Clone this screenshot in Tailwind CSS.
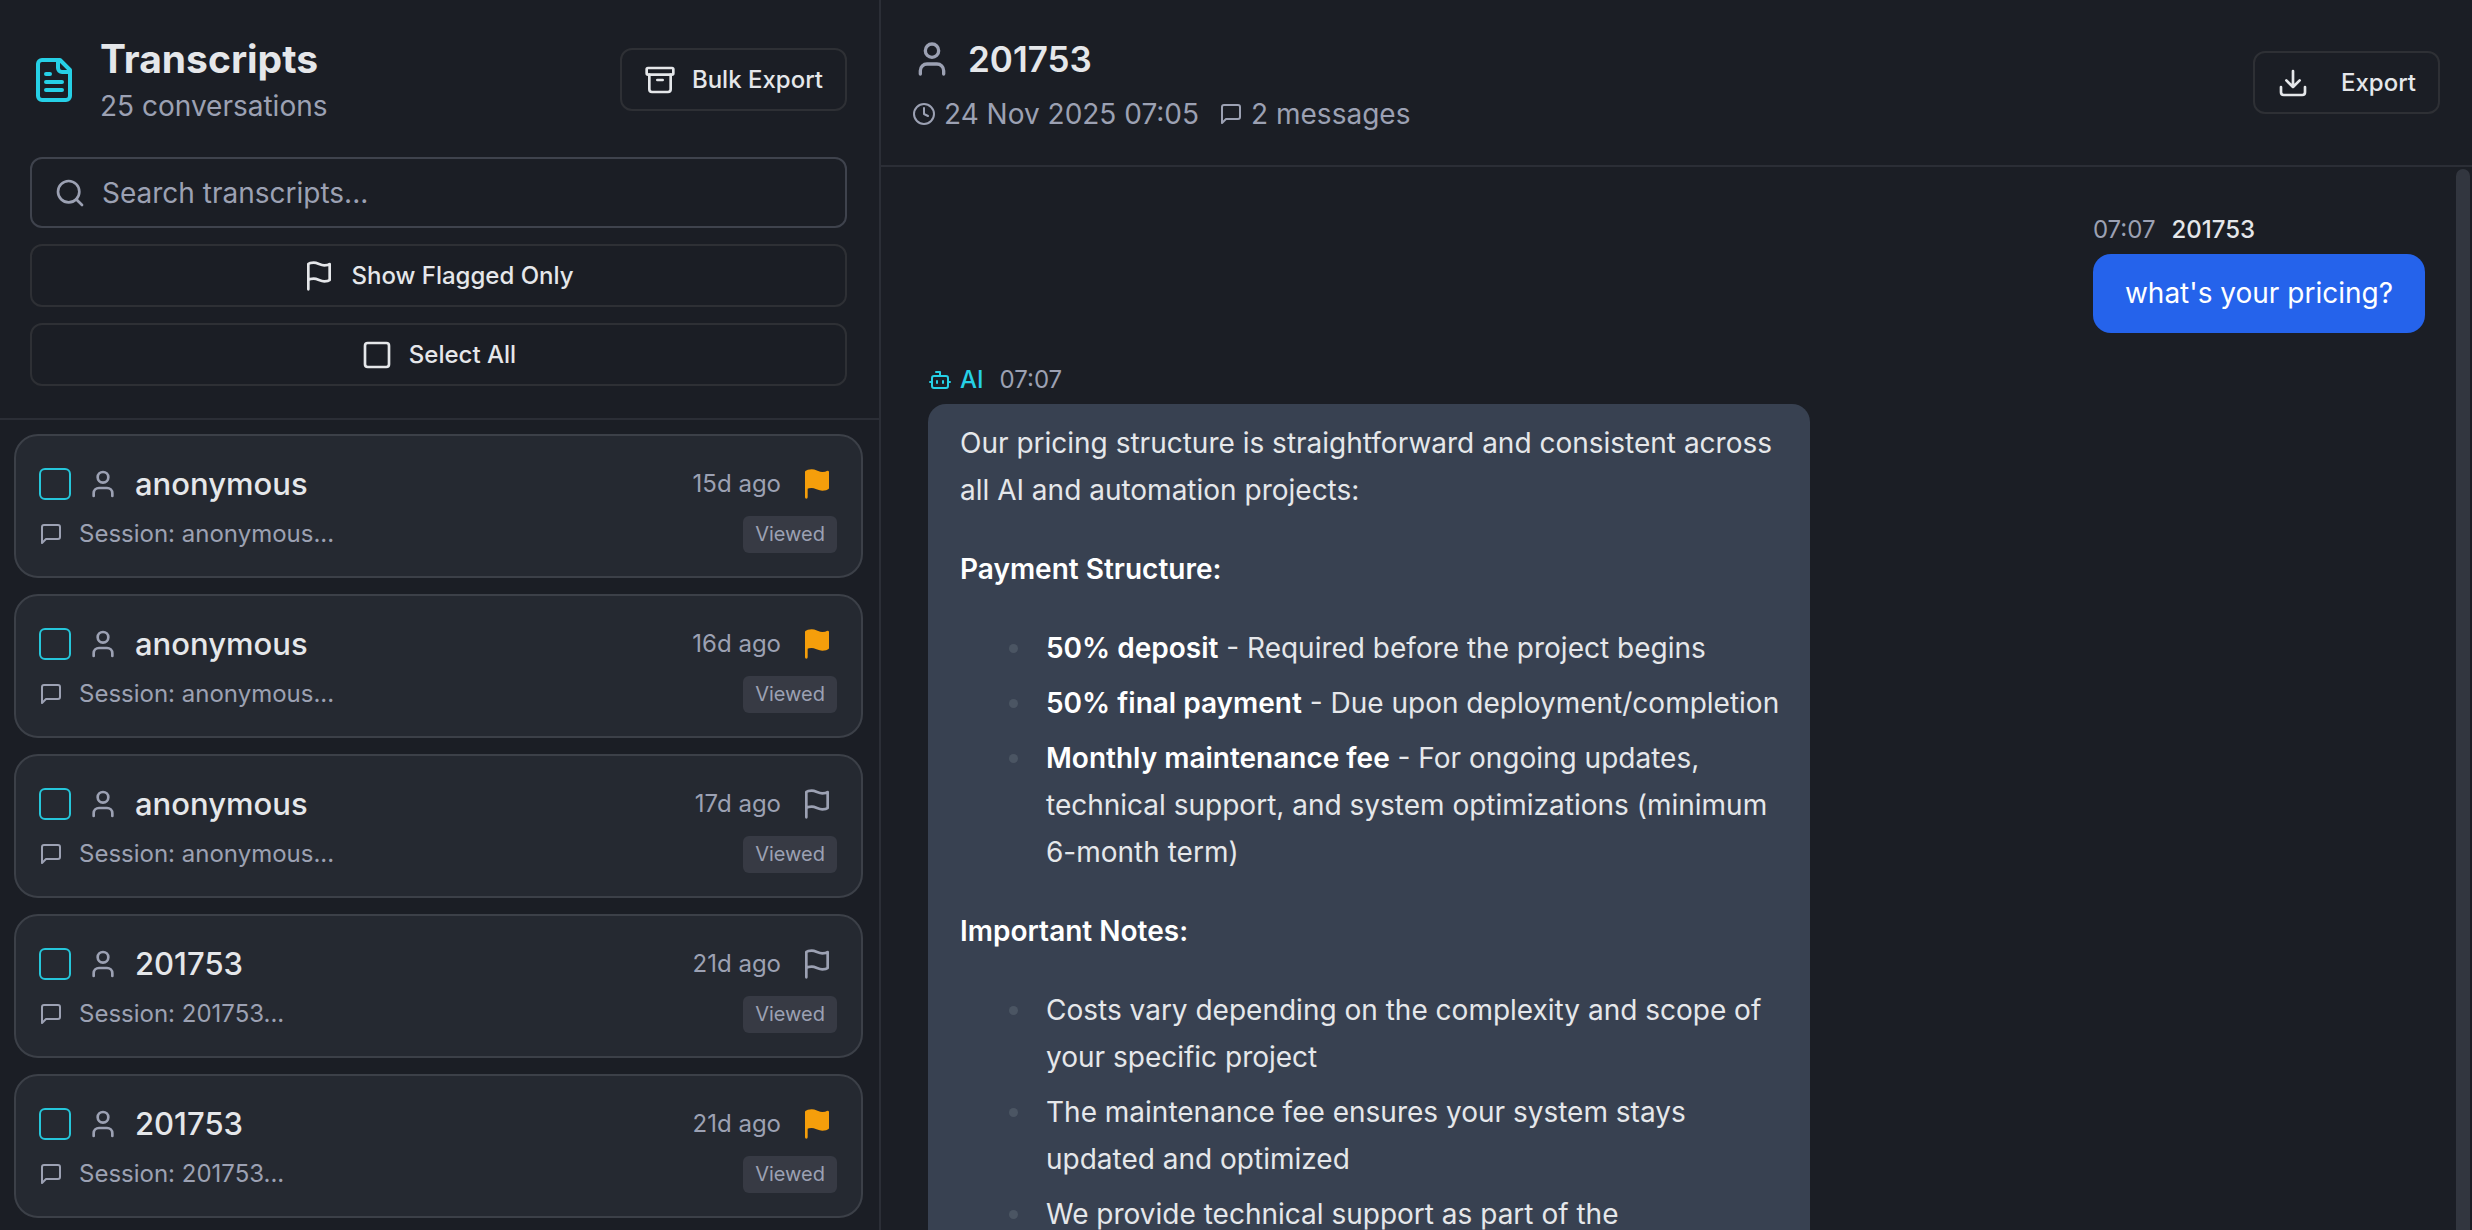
<!DOCTYPE html>
<html lang="en">
<head>
<meta charset="utf-8">
<meta name="viewport" content="width=device-width, initial-scale=1">
<title>Transcripts</title>
<script src="https://cdn.jsdelivr.net/npm/@tailwindcss/browser@4"></script>
</head>
<body class="h-screen overflow-hidden bg-[#1b1e25] font-['Inter',sans-serif] text-[#e5e7ea]">
<svg class="hidden" aria-hidden="true">
  <symbol id="i-file" viewBox="0 0 24 24"><path d="M15 2H6a2 2 0 0 0-2 2v16a2 2 0 0 0 2 2h12a2 2 0 0 0 2-2V7Z"/><path d="M14 2v4a2 2 0 0 0 2 2h4M10 9H8M16 13H8M16 17H8"/></symbol>
  <symbol id="i-archive" viewBox="0 0 24 24"><rect x="2" y="3" width="20" height="5" rx="1"/><path d="M4 8v11a2 2 0 0 0 2 2h12a2 2 0 0 0 2-2V8M10 12h4"/></symbol>
  <symbol id="i-search" viewBox="0 0 24 24"><circle cx="11" cy="11" r="8"/><path d="m21 21-4.34-4.34"/></symbol>
  <symbol id="i-flag" viewBox="0 0 24 24"><path d="M4 15s1-1 4-1 5 2 8 2 4-1 4-1V3s-1 1-4 1-5-2-8-2-4 1-4 1zM4 22v-7"/></symbol>
  <symbol id="i-square" viewBox="0 0 24 24"><rect x="3" y="3" width="18" height="18" rx="2"/></symbol>
  <symbol id="i-user" viewBox="0 0 24 24"><path d="M19 21v-2a4 4 0 0 0-4-4H9a4 4 0 0 0-4 4v2"/><circle cx="12" cy="7" r="4"/></symbol>
  <symbol id="i-message" viewBox="0 0 24 24"><path d="M21 15a2 2 0 0 1-2 2H7l-4 4V5a2 2 0 0 1 2-2h14a2 2 0 0 1 2 2z"/></symbol>
  <symbol id="i-clock" viewBox="0 0 24 24"><circle cx="12" cy="12" r="10"/><path d="M12 6v6l4 2"/></symbol>
  <symbol id="i-download" viewBox="0 0 24 24"><path d="M12 15V3M21 15v4a2 2 0 0 1-2 2H5a2 2 0 0 1-2-2v-4M7 10l5 5 5-5"/></symbol>
  <symbol id="i-bot" viewBox="0 0 24 24"><path d="M12 8V4H8"/><rect x="4" y="8" width="16" height="12" rx="2"/><path d="M2 14h2M20 14h2M15 13v2M9 13v2"/></symbol>
</svg>
<div class="flex h-full">

  <aside class="flex w-[881px] max-w-[40%] shrink-0 flex-col border-r-2 border-[#2b2e36]">
    <header class="flex flex-col gap-4 border-b-2 border-[#2b2e36] py-8 pr-8 pl-[30px]">
      <div class="mb-[14px] flex items-center gap-[22px]">
        <svg class="size-12 shrink-0 fill-none stroke-[#26d0e6] stroke-2" stroke-linecap="round" stroke-linejoin="round"><use href="#i-file"/></svg>
        <div class="flex-1">
          <h1 class="text-[39px] leading-[53px] font-bold">Transcripts</h1>
          <p class="text-[28px] leading-[42px] text-[#9ca1b3]">25 conversations</p>
        </div>
        <button type="button" class="flex h-[63px] items-center gap-4 rounded-xl border-2 border-[#2e3035] px-[22px] text-2xl font-medium">
          <svg class="size-8 fill-none stroke-current stroke-2" stroke-linecap="round" stroke-linejoin="round"><use href="#i-archive"/></svg>
          Bulk Export
        </button>
      </div>
      <label class="flex h-[71px] items-center gap-4 rounded-xl border-2 border-[#3f434d] px-[22px]">
        <svg class="size-8 shrink-0 fill-none stroke-[#9ca1b3] stroke-2" stroke-linecap="round" stroke-linejoin="round"><use href="#i-search"/></svg>
        <input type="search" aria-label="Search transcripts" placeholder="Search transcripts..." class="min-w-0 flex-1 bg-transparent text-[28px] outline-none placeholder:text-[#9ca1b3]">
      </label>
      <button type="button" class="flex h-[63px] items-center justify-center gap-4 rounded-xl border-2 border-[#2e3035] text-2xl font-medium">
        <svg class="size-8 fill-none stroke-current stroke-2" stroke-linecap="round" stroke-linejoin="round"><use href="#i-flag"/></svg>
        Show Flagged Only
      </button>
      <button type="button" class="flex h-[63px] items-center justify-center gap-4 rounded-xl border-2 border-[#2e3035] text-2xl font-medium">
        <svg class="size-8 fill-none stroke-current stroke-2" stroke-linecap="round" stroke-linejoin="round"><use href="#i-square"/></svg>
        Select All
      </button>
    </header>

    <ul class="flex min-h-0 flex-1 flex-col gap-4 overflow-hidden pt-[14px] pr-4 pl-[14px]">
      <li class="flex h-36 shrink-0 flex-col gap-[2px] rounded-3xl border-2 border-[#3c4048] bg-[#252931] pt-6 pr-6 pl-[23px]">
        <div class="flex h-12 items-center gap-4">
          <input type="checkbox" aria-label="Select anonymous, 15d ago" class="size-8 appearance-none rounded-md border-2 border-[#26c6da]">
          <svg class="size-8 fill-none stroke-[#9ca1b3] stroke-2" stroke-linecap="round" stroke-linejoin="round"><use href="#i-user"/></svg>
          <h2 class="flex-1 text-[31px] leading-12 font-medium">anonymous</h2>
          <time class="text-2xl text-[#9ca1b3]">15d ago</time>
          <button type="button" aria-label="Remove flag" class="px-1"><svg class="size-8 fill-[#f59e0b] stroke-[#f59e0b] stroke-2" stroke-linecap="round" stroke-linejoin="round"><use href="#i-flag"/></svg></button>
        </div>
        <div class="flex h-12 items-center gap-4 text-2xl text-[#9ca1b3]">
          <svg class="size-6 fill-none stroke-current stroke-2" stroke-linecap="round" stroke-linejoin="round"><use href="#i-message"/></svg>
          <p class="flex-1">Session: anonymous...</p>
          <span class="rounded-md bg-[#373a44] px-3 text-xl leading-[37px]">Viewed</span>
        </div>
      </li>
      <li class="flex h-36 shrink-0 flex-col gap-[2px] rounded-3xl border-2 border-[#3c4048] bg-[#252931] pt-6 pr-6 pl-[23px]">
        <div class="flex h-12 items-center gap-4">
          <input type="checkbox" aria-label="Select anonymous, 16d ago" class="size-8 appearance-none rounded-md border-2 border-[#26c6da]">
          <svg class="size-8 fill-none stroke-[#9ca1b3] stroke-2" stroke-linecap="round" stroke-linejoin="round"><use href="#i-user"/></svg>
          <h2 class="flex-1 text-[31px] leading-12 font-medium">anonymous</h2>
          <time class="text-2xl text-[#9ca1b3]">16d ago</time>
          <button type="button" aria-label="Remove flag" class="px-1"><svg class="size-8 fill-[#f59e0b] stroke-[#f59e0b] stroke-2" stroke-linecap="round" stroke-linejoin="round"><use href="#i-flag"/></svg></button>
        </div>
        <div class="flex h-12 items-center gap-4 text-2xl text-[#9ca1b3]">
          <svg class="size-6 fill-none stroke-current stroke-2" stroke-linecap="round" stroke-linejoin="round"><use href="#i-message"/></svg>
          <p class="flex-1">Session: anonymous...</p>
          <span class="rounded-md bg-[#373a44] px-3 text-xl leading-[37px]">Viewed</span>
        </div>
      </li>
      <li class="flex h-36 shrink-0 flex-col gap-[2px] rounded-3xl border-2 border-[#3c4048] bg-[#252931] pt-6 pr-6 pl-[23px]">
        <div class="flex h-12 items-center gap-4">
          <input type="checkbox" aria-label="Select anonymous, 17d ago" class="size-8 appearance-none rounded-md border-2 border-[#26c6da]">
          <svg class="size-8 fill-none stroke-[#9ca1b3] stroke-2" stroke-linecap="round" stroke-linejoin="round"><use href="#i-user"/></svg>
          <h2 class="flex-1 text-[31px] leading-12 font-medium">anonymous</h2>
          <time class="text-2xl text-[#9ca1b3]">17d ago</time>
          <button type="button" aria-label="Flag" class="px-1"><svg class="size-8 fill-none stroke-[#9ca1b3] stroke-2" stroke-linecap="round" stroke-linejoin="round"><use href="#i-flag"/></svg></button>
        </div>
        <div class="flex h-12 items-center gap-4 text-2xl text-[#9ca1b3]">
          <svg class="size-6 fill-none stroke-current stroke-2" stroke-linecap="round" stroke-linejoin="round"><use href="#i-message"/></svg>
          <p class="flex-1">Session: anonymous...</p>
          <span class="rounded-md bg-[#373a44] px-3 text-xl leading-[37px]">Viewed</span>
        </div>
      </li>
      <li class="flex h-36 shrink-0 flex-col gap-[2px] rounded-3xl border-2 border-[#3c4048] bg-[#252931] pt-6 pr-6 pl-[23px]">
        <div class="flex h-12 items-center gap-4">
          <input type="checkbox" aria-label="Select 201753, 21d ago" class="size-8 appearance-none rounded-md border-2 border-[#26c6da]">
          <svg class="size-8 fill-none stroke-[#9ca1b3] stroke-2" stroke-linecap="round" stroke-linejoin="round"><use href="#i-user"/></svg>
          <h2 class="flex-1 text-[31px] leading-12 font-medium">201753</h2>
          <time class="text-2xl text-[#9ca1b3]">21d ago</time>
          <button type="button" aria-label="Flag" class="px-1"><svg class="size-8 fill-none stroke-[#9ca1b3] stroke-2" stroke-linecap="round" stroke-linejoin="round"><use href="#i-flag"/></svg></button>
        </div>
        <div class="flex h-12 items-center gap-4 text-2xl text-[#9ca1b3]">
          <svg class="size-6 fill-none stroke-current stroke-2" stroke-linecap="round" stroke-linejoin="round"><use href="#i-message"/></svg>
          <p class="flex-1">Session: 201753...</p>
          <span class="rounded-md bg-[#373a44] px-3 text-xl leading-[37px]">Viewed</span>
        </div>
      </li>
      <li class="flex h-36 shrink-0 flex-col gap-[2px] rounded-3xl border-2 border-[#3c4048] bg-[#252931] pt-6 pr-6 pl-[23px]">
        <div class="flex h-12 items-center gap-4">
          <input type="checkbox" aria-label="Select 201753, 21d ago, flagged" class="size-8 appearance-none rounded-md border-2 border-[#26c6da]">
          <svg class="size-8 fill-none stroke-[#9ca1b3] stroke-2" stroke-linecap="round" stroke-linejoin="round"><use href="#i-user"/></svg>
          <h2 class="flex-1 text-[31px] leading-12 font-medium">201753</h2>
          <time class="text-2xl text-[#9ca1b3]">21d ago</time>
          <button type="button" aria-label="Remove flag" class="px-1"><svg class="size-8 fill-[#f59e0b] stroke-[#f59e0b] stroke-2" stroke-linecap="round" stroke-linejoin="round"><use href="#i-flag"/></svg></button>
        </div>
        <div class="flex h-12 items-center gap-4 text-2xl text-[#9ca1b3]">
          <svg class="size-6 fill-none stroke-current stroke-2" stroke-linecap="round" stroke-linejoin="round"><use href="#i-message"/></svg>
          <p class="flex-1">Session: 201753...</p>
          <span class="rounded-md bg-[#373a44] px-3 text-xl leading-[37px]">Viewed</span>
        </div>
      </li>
    </ul>
  </aside>

  <main class="flex min-w-0 flex-1 flex-col">
    <header class="flex items-center border-b-2 border-[#2b2e36] py-8 pr-8 pl-[31px]">
      <div class="flex-1">
        <div class="flex h-[54px] items-center gap-4">
          <svg class="size-10 fill-none stroke-[#9ca1b3] stroke-2" stroke-linecap="round" stroke-linejoin="round"><use href="#i-user"/></svg>
          <h2 class="text-[35px] leading-[54px] font-semibold">201753</h2>
        </div>
        <div class="flex h-[47px] items-center gap-5 pt-2 text-[28px] text-[#9ca1b3]">
          <span class="flex items-center gap-2"><svg class="size-6 fill-none stroke-current stroke-2" stroke-linecap="round" stroke-linejoin="round"><use href="#i-clock"/></svg>24 Nov 2025 07:05</span>
          <span class="flex items-center gap-2"><svg class="size-6 fill-none stroke-current stroke-2" stroke-linecap="round" stroke-linejoin="round"><use href="#i-message"/></svg>2 messages</span>
        </div>
      </div>
      <button type="button" class="flex h-[63px] items-center gap-8 rounded-xl border-2 border-[#2e3035] px-[22px] text-2xl font-medium">
        <svg class="size-8 fill-none stroke-current stroke-2" stroke-linecap="round" stroke-linejoin="round"><use href="#i-download"/></svg>
        Export
      </button>
    </header>

    <section class="relative flex min-h-0 flex-1 flex-col gap-[31px] overflow-hidden px-[47px] pt-[47px]">
      <article class="flex shrink-0 flex-col gap-2 self-end">
        <div class="flex items-center gap-4 text-2xl"><time class="text-[#9ca1b3]">07:07</time><span class="font-medium">201753</span></div>
        <p class="rounded-[18px] bg-[#2563eb] px-8 py-4 text-[28px] leading-[47px] text-white">what's your pricing?</p>
      </article>
      <article class="flex w-[882px] max-w-full shrink-0 flex-col gap-2">
        <div class="flex items-center gap-4 text-2xl"><span class="flex items-center gap-2 font-medium text-[#26d0e6]"><svg class="size-6 fill-none stroke-current stroke-2" stroke-linecap="round" stroke-linejoin="round"><use href="#i-bot"/></svg>AI</span><time class="text-[#9ca1b3]">07:07</time></div>
        <div class="flex flex-col gap-8 rounded-[18px] bg-[#384151] py-4 pr-6 pl-8 text-[28px] leading-[47px]">
          <p>Our pricing structure is straightforward and consistent across all AI and automation projects:</p>
          <p class="font-semibold text-white">Payment Structure:</p>
          <ul class="flex list-disc flex-col gap-2 pl-[74px] marker:text-[#4b5563]">
            <li class="pl-3"><strong class="font-semibold text-white">50% deposit</strong> - Required before the project begins</li>
            <li class="pl-3"><strong class="font-semibold text-white">50% final payment</strong> - Due upon deployment/completion</li>
            <li class="pl-3"><strong class="font-semibold text-white">Monthly maintenance fee</strong> - For ongoing updates, technical support, and system optimizations (minimum 6-month term)</li>
          </ul>
          <p class="font-semibold text-white">Important Notes:</p>
          <ul class="flex list-disc flex-col gap-2 pl-[74px] marker:text-[#4b5563]">
            <li class="pl-3">Costs vary depending on the complexity and scope of your specific project</li>
            <li class="pl-3">The maintenance fee ensures your system stays updated and optimized</li>
            <li class="pl-3">We provide technical support as part of the maintenance agreement</li>
          </ul>
        </div>
      </article>
      <div class="absolute top-[2px] right-[2px] bottom-0 w-[14px] rounded-t-full bg-[#32363f]"></div>
    </section>
  </main>
</div>
</body>
</html>
